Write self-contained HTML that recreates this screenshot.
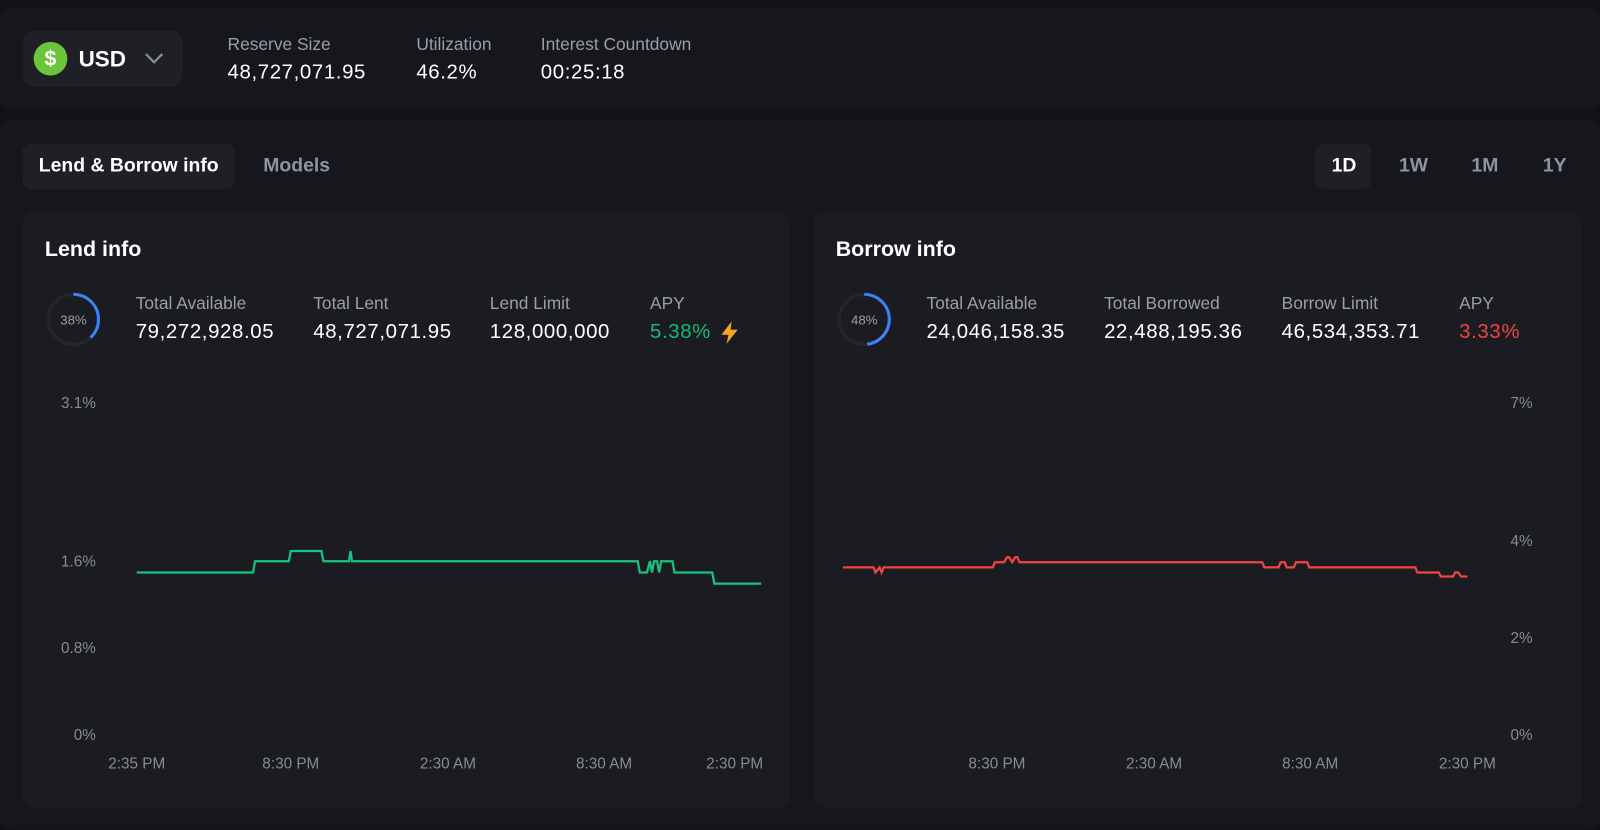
<!DOCTYPE html>
<html><head><meta charset="utf-8"><style>
*{margin:0;padding:0;box-sizing:border-box}
body{width:1600px;height:813px;background:#111217;font-family:"Liberation Sans",sans-serif;position:relative;overflow:hidden;color:#fff}
#w{position:absolute;left:0;top:0;width:1568px;height:797px;transform:scale(1.0204);transform-origin:0 0}
.a{position:absolute;white-space:nowrap}
.panel{position:absolute;background:#16171c;border-radius:10px}
.card{position:absolute;background:#1b1c21;border-radius:12px}
.lbl{font-size:17px;color:#9a9eab}
.val{font-size:20px;color:#fff;letter-spacing:0.6px}
.ax{font-size:15px;color:#878b96}
</style></head><body><div id="w">
<div class="panel" style="left:0;top:8px;width:1568px;height:99px"></div>
<div class="a" style="left:22px;top:30px;width:157px;height:55px;background:#1f2025;border-radius:12px"></div>
<div class="a" style="left:33px;top:41px;width:33px;height:33px;border-radius:50%;background:#6cc43c;color:#fff;font-size:21px;font-weight:bold;text-align:center;line-height:33px">$</div>
<div class="a" style="left:77px;top:45px;font-size:22px;font-weight:bold">USD</div>
<svg class="a" style="left:141px;top:50px" width="20" height="14"><path d="M2 3 L10 11 L18 3" stroke="#8a8e99" stroke-width="2.2" fill="none"/></svg>
<div class="a lbl" style="left:223px;top:34px">Reserve Size</div>
<div class="a val" style="left:223px;top:60px">48,727,071.95</div>
<div class="a lbl" style="left:408px;top:34px">Utilization</div>
<div class="a val" style="left:408px;top:60px">46.2%</div>
<div class="a lbl" style="left:530px;top:34px">Interest Countdown</div>
<div class="a val" style="left:530px;top:60px">00:25:18</div>

<div class="panel" style="left:0;top:118px;width:1568px;height:695px"></div>
<div class="a" style="left:22px;top:141px;width:208px;height:44px;background:#1f2025;border-radius:8px"></div>
<div class="a" style="left:38px;top:152px;font-size:19px;font-weight:bold">Lend &amp; Borrow info</div>
<div class="a" style="left:258px;top:152px;font-size:19px;font-weight:bold;color:#8f93a0">Models</div>
<div class="a" style="left:1289px;top:141px;width:55px;height:44px;background:#1f2025;border-radius:8px"></div>
<div class="a" style="left:1305px;top:152px;font-size:19px;font-weight:bold">1D</div>
<div class="a" style="left:1371px;top:152px;font-size:19px;font-weight:bold;color:#8f93a0">1W</div>
<div class="a" style="left:1442px;top:152px;font-size:19px;font-weight:bold;color:#8f93a0">1M</div>
<div class="a" style="left:1512px;top:152px;font-size:19px;font-weight:bold;color:#8f93a0">1Y</div>

<div class="card" style="left:22px;top:207px;width:752px;height:585px"></div>
<div class="card" style="left:797px;top:207px;width:753px;height:585px"></div>

<div class="a" style="left:44px;top:233px;font-size:21px;font-weight:bold">Lend info</div>
<svg class="a" style="left:45px;top:286px" width="55" height="55"><circle cx="27" cy="27" r="24.5" stroke="#24252b" stroke-width="3.5" fill="none"/><circle cx="27" cy="27" r="24.5" stroke="#3b82f6" stroke-width="3" fill="none" stroke-dasharray="58.5 200" transform="rotate(-90 27 27)"/><text x="27" y="32" text-anchor="middle" font-size="13" fill="#9a9eab" font-family="Liberation Sans">38%</text></svg>
<div class="a lbl" style="left:133px;top:288px">Total Available</div>
<div class="a val" style="left:133px;top:314px">79,272,928.05</div>
<div class="a lbl" style="left:307px;top:288px">Total Lent</div>
<div class="a val" style="left:307px;top:314px">48,727,071.95</div>
<div class="a lbl" style="left:480px;top:288px">Lend Limit</div>
<div class="a val" style="left:480px;top:314px">128,000,000</div>
<div class="a lbl" style="left:637px;top:288px">APY</div>
<div class="a val" style="left:637px;top:314px;color:#16b979">5.38%</div>
<svg class="a" style="left:704px;top:314px" width="22" height="24"><path d="M13 1 L3 14 L10 14 L8 23 L19 9 L12 9 Z" fill="#f5a623"/></svg>

<div class="a ax" style="left:40px;top:387px;width:54px;text-align:right">3.1%</div>
<div class="a ax" style="left:40px;top:542px;width:54px;text-align:right">1.6%</div>
<div class="a ax" style="left:40px;top:627px;width:54px;text-align:right">0.8%</div>
<div class="a ax" style="left:40px;top:712px;width:54px;text-align:right">0%</div>
<div class="a ax" style="left:84px;top:740px;width:100px;text-align:center">2:35 PM</div>
<div class="a ax" style="left:235px;top:740px;width:100px;text-align:center">8:30 PM</div>
<div class="a ax" style="left:389px;top:740px;width:100px;text-align:center">2:30 AM</div>
<div class="a ax" style="left:542px;top:740px;width:100px;text-align:center">8:30 AM</div>
<div class="a ax" style="left:670px;top:740px;width:100px;text-align:center">2:30 PM</div>
<svg class="a" style="left:0;top:0" width="1568" height="797"><path d="M134 561 H248 L250 550 H283 L285 540 H315 L317 550 H342 L343.5 540 L345 550 H625 L627 561 H634 L637 550 L639 561 L641 550 L644 550 L646 561 L648 550 H659 L661 561 H698 L700 572 H746" stroke="#16c47f" stroke-width="2.2" fill="none"/>
<path d="M826 556 H856 L858 561 L862 556 L864 561 L866 556 H973 L975 551 H984 L987 546 H989 L992 551 L995 546 H997 L999 551 H1237 L1239 556 H1253 L1255 551 H1259 L1261 556 H1268 L1270 551 H1281 L1283 556 H1387 L1389 561 H1410 L1412 565 H1424 L1426 561 H1429 L1432 565 H1438" stroke="#f04444" stroke-width="2.2" fill="none"/></svg>

<div class="a" style="left:819px;top:233px;font-size:21px;font-weight:bold">Borrow info</div>
<svg class="a" style="left:820px;top:286px" width="55" height="55"><circle cx="27" cy="27" r="24.5" stroke="#24252b" stroke-width="3.5" fill="none"/><circle cx="27" cy="27" r="24.5" stroke="#3b82f6" stroke-width="3" fill="none" stroke-dasharray="74 200" transform="rotate(-90 27 27)"/><text x="27" y="32" text-anchor="middle" font-size="13" fill="#9a9eab" font-family="Liberation Sans">48%</text></svg>
<div class="a lbl" style="left:908px;top:288px">Total Available</div>
<div class="a val" style="left:908px;top:314px">24,046,158.35</div>
<div class="a lbl" style="left:1082px;top:288px">Total Borrowed</div>
<div class="a val" style="left:1082px;top:314px">22,488,195.36</div>
<div class="a lbl" style="left:1256px;top:288px">Borrow Limit</div>
<div class="a val" style="left:1256px;top:314px">46,534,353.71</div>
<div class="a lbl" style="left:1430px;top:288px">APY</div>
<div class="a val" style="left:1430px;top:314px;color:#f04444">3.33%</div>

<div class="a ax" style="left:1450px;top:387px;width:52px;text-align:right">7%</div>
<div class="a ax" style="left:1450px;top:522px;width:52px;text-align:right">4%</div>
<div class="a ax" style="left:1450px;top:617px;width:52px;text-align:right">2%</div>
<div class="a ax" style="left:1450px;top:712px;width:52px;text-align:right">0%</div>
<div class="a ax" style="left:927px;top:740px;width:100px;text-align:center">8:30 PM</div>
<div class="a ax" style="left:1081px;top:740px;width:100px;text-align:center">2:30 AM</div>
<div class="a ax" style="left:1234px;top:740px;width:100px;text-align:center">8:30 AM</div>
<div class="a ax" style="left:1388px;top:740px;width:100px;text-align:center">2:30 PM</div>
</div></body></html>
